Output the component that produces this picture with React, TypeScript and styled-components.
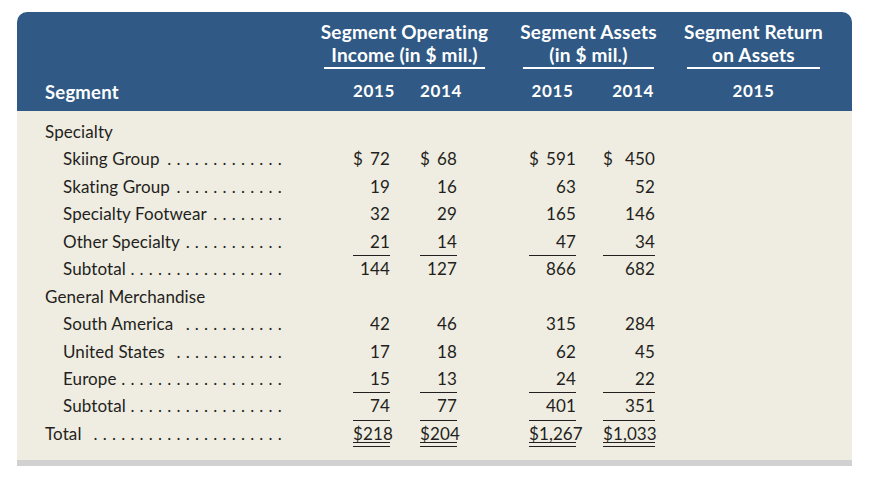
import React from "react";
import styled, { createGlobalStyle } from "styled-components";

const Global = createGlobalStyle`
  html, body { margin: 0; padding: 0; background: #ffffff; }
  body { font-family: Lato, "Open Sans", "Liberation Sans", sans-serif; }
`;

const Page = styled.div`
  width: 896px;
  height: 484px;
  padding: 12px 0 0 17px;
  box-sizing: border-box;
`;

const Card = styled.div`
  width: 835px;
  display: flex;
  flex-direction: column;
`;

const Header = styled.div`
  background: #305a85;
  color: #ffffff;
  border-radius: 10px 10px 0 0;
  height: 99px;
  box-sizing: border-box;
  padding: 8px 0 0 28px;
  display: grid;
  grid-template-columns: 279px 161px 38px 131px 33px 133px;
  font-weight: 700;
  font-size: 19px;
  letter-spacing: 0.2px;
`;

const HeadLabel = styled.div`
  grid-column: 1;
  align-self: end;
  line-height: 23px;
  margin-bottom: 7px;
  font-size: 18.5px;
`;

const Group = styled.div<{ $col: number }>`
  grid-column: ${(p) => p.$col};
  display: flex;
  flex-direction: column;
`;

const Title = styled.div`
  display: flex;
  flex-direction: column;
  align-items: center;
  line-height: 23px;
  white-space: nowrap;
  padding-bottom: 1px;
  border-bottom: 2px solid #ffffff;
`;

const Years = styled.div<{ $cols: string }>`
  display: grid;
  grid-template-columns: ${(p) => p.$cols};
  margin-top: 10px;
  line-height: 23px;
  font-size: 17px;
  letter-spacing: 0.6px;
`;

const Year = styled.div<{ $col: number; $align: "right" | "center" }>`
  grid-column: ${(p) => p.$col};
  text-align: ${(p) => p.$align};
  white-space: nowrap;
`;

const Body = styled.div`
  background: #efece1;
  padding: 7px 0 13px 28px;
  color: #231f20;
  font-size: 17px;
  letter-spacing: 0.1px;
`;

const Row = styled.div`
  display: grid;
  grid-template-columns: 308px 37px 30px 37px 72px 47px 27px 52px;
  height: 27.45px;
  line-height: 27.45px;
`;

const Label = styled.div<{ $indent: boolean }>`
  grid-column: 1;
  display: flex;
  justify-content: space-between;
  padding-left: ${(p) => (p.$indent ? 18 : 0)}px;
  padding-right: 66px;
  white-space: nowrap;
`;

const Dots = styled.span`
  white-space: nowrap;
  letter-spacing: 5.2px;
`;

type Rule = "none" | "single" | "double";

const Num = styled.div<{ $col: number; $rule: Rule }>`
  grid-column: ${(p) => p.$col};
  display: flex;
  justify-content: space-between;
  white-space: nowrap;
  box-sizing: border-box;
  border-bottom: ${(p) => (p.$rule === "single" ? "1px solid #231f20" : "none")};
  background: ${(p) =>
    p.$rule === "double"
      ? "linear-gradient(#231f20,#231f20) left bottom / 100% 1px no-repeat, linear-gradient(#231f20,#231f20) left bottom 4px / 100% 1px no-repeat"
      : "none"};
`;

const Bar = styled.div`
  height: 6px;
  background: #d1d1d1;
`;

type Line = {
  label: string;
  indent: boolean;
  dots: number;
  vals?: string[];
  dollar?: boolean;
  rule?: Rule;
};

const lines: Line[] = [
  { label: "Specialty", indent: false, dots: 0 },
  { label: "Skiing Group", indent: true, dots: 13, vals: ["72", "68", "591", "450"], dollar: true },
  { label: "Skating Group", indent: true, dots: 12, vals: ["19", "16", "63", "52"] },
  { label: "Specialty Footwear", indent: true, dots: 8, vals: ["32", "29", "165", "146"] },
  { label: "Other Specialty", indent: true, dots: 11, vals: ["21", "14", "47", "34"], rule: "single" },
  { label: "Subtotal", indent: true, dots: 17, vals: ["144", "127", "866", "682"] },
  { label: "General Merchandise", indent: false, dots: 0 },
  { label: "South America", indent: true, dots: 11, vals: ["42", "46", "315", "284"] },
  { label: "United States", indent: true, dots: 12, vals: ["17", "18", "62", "45"] },
  { label: "Europe", indent: true, dots: 18, vals: ["15", "13", "24", "22"], rule: "single" },
  { label: "Subtotal", indent: true, dots: 17, vals: ["74", "77", "401", "351"], rule: "single" },
  { label: "Total", indent: false, dots: 21, vals: ["$218", "$204", "$1,267", "$1,033"], rule: "double" },
];

const numCols = [2, 4, 6, 8];

export default function App() {
  return (
    <Page>
      <Global />
      <Card>
        <Header>
          <HeadLabel>Segment</HeadLabel>
          <Group $col={2}>
            <Title>
              <span>Segment Operating</span>
              <span>Income (in $ mil.)</span>
            </Title>
            <Years $cols="29px 37px 30px 37px 28px">
              <Year $col={2} $align="right">2015</Year>
              <Year $col={4} $align="right">2014</Year>
            </Years>
          </Group>
          <Group $col={4}>
            <Title>
              <span>Segment Assets</span>
              <span>(in $ mil.)</span>
            </Title>
            <Years $cols="6px 47px 27px 51px">
              <Year $col={2} $align="center">2015</Year>
              <Year $col={4} $align="right">2014</Year>
            </Years>
          </Group>
          <Group $col={6}>
            <Title>
              <span>Segment Return</span>
              <span>on Assets</span>
            </Title>
            <Years $cols="1fr">
              <Year $col={1} $align="center">2015</Year>
            </Years>
          </Group>
        </Header>
        <Body>
          {lines.map((l, i) => (
            <Row key={i}>
              <Label $indent={l.indent}>
                <span>{l.label}</span>
                {l.dots > 0 && <Dots>{".".repeat(l.dots)}</Dots>}
              </Label>
              {l.vals &&
                l.vals.map((v, j) => (
                  <Num key={j} $col={numCols[j]} $rule={l.rule ?? "none"}>
                    {l.dollar ? <span>$</span> : <span />}
                    <span>{v}</span>
                  </Num>
                ))}
            </Row>
          ))}
        </Body>
        <Bar />
      </Card>
    </Page>
  );
}
